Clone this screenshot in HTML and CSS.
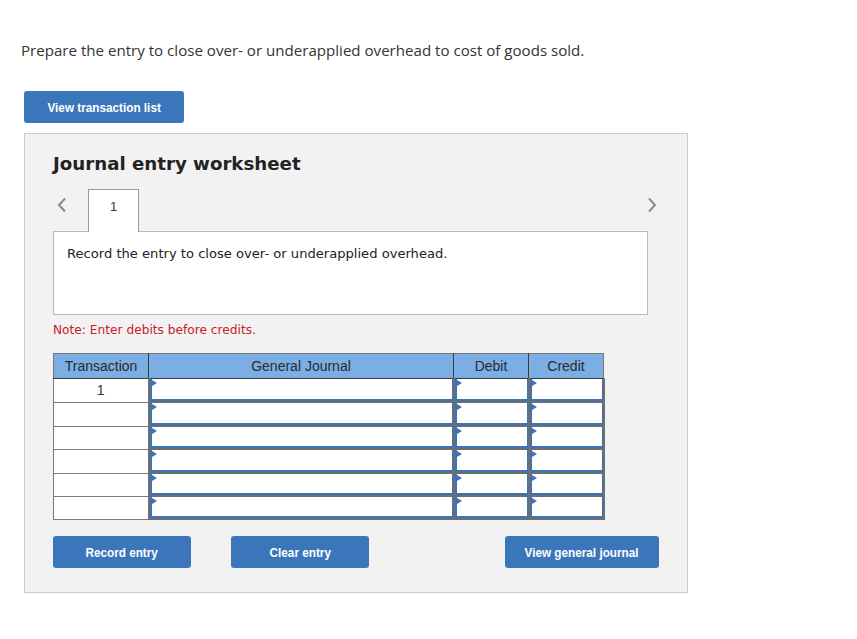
FILE: index.html
```html
<!DOCTYPE html>
<html lang="en">
<head>
<meta charset="utf-8">
<title>Journal entry worksheet</title>
<link rel="stylesheet" href="styles.css">
</head>
<body>
<p class="prompt">Prepare the entry to close over- or underapplied overhead to cost of goods sold.</p>
<button class="btn btn-list"><span class="lbl">View transaction list</span></button>
<section class="panel">
  <h2 class="title">Journal entry worksheet</h2>
  <div class="tabrow">
    <span class="chev chev-left"><svg width="10" height="16" viewBox="0 0 10 16"><polyline points="8,1.5 2,8 8,14.5" fill="none" stroke="#8c8c8c" stroke-width="2"/></svg></span>
    <span class="tab">1</span>
    <span class="chev chev-right"><svg width="10" height="16" viewBox="0 0 10 16"><polyline points="2,1.5 8,8 2,14.5" fill="none" stroke="#8c8c8c" stroke-width="2"/></svg></span>
  </div>
  <div class="taskbox">Record the entry to close over- or underapplied overhead.</div>
  <p class="note">Note: Enter debits before credits.</p>
  <table class="journal">
    <colgroup><col class="c1"><col class="c2"><col class="c3"><col class="c4"></colgroup>
    <thead>
      <tr><th>Transaction</th><th>General Journal</th><th>Debit</th><th>Credit</th></tr>
    </thead>
    <tbody>
      <tr class="r24"><td class="tn">1</td><td class="in"><div class="field"></div></td><td class="in"><div class="field"></div></td><td class="in"><div class="field"></div></td></tr>
      <tr class="r24"><td class="tn"></td><td class="in"><div class="field"></div></td><td class="in"><div class="field"></div></td><td class="in"><div class="field"></div></td></tr>
      <tr class="r23"><td class="tn"></td><td class="in"><div class="field"></div></td><td class="in"><div class="field"></div></td><td class="in"><div class="field"></div></td></tr>
      <tr class="r24"><td class="tn"></td><td class="in"><div class="field"></div></td><td class="in"><div class="field"></div></td><td class="in"><div class="field"></div></td></tr>
      <tr class="r23"><td class="tn"></td><td class="in"><div class="field"></div></td><td class="in"><div class="field"></div></td><td class="in"><div class="field"></div></td></tr>
      <tr class="r23"><td class="tn"></td><td class="in"><div class="field"></div></td><td class="in"><div class="field"></div></td><td class="in"><div class="field"></div></td></tr>
    </tbody>
  </table>
  <div class="actions">
    <button class="btn btn-act"><span class="lbl">Record entry</span></button>
    <button class="btn btn-act btn-clear"><span class="lbl">Clear entry</span></button>
    <button class="btn btn-act btn-view"><span class="lbl">View general journal</span></button>
  </div>
</section>
</body>
</html>
```

FILE: styles.css
```css
html, body {
  margin: 0;
  padding: 0;
  background: #ffffff;
}
body {
  font-family: "Open Sans", "Liberation Sans", sans-serif;
  color: #333333;
}
.prompt {
  margin: 0;
  padding: 40px 0 0 21px;
  font-size: 15.1px;
  line-height: 20px;
  color: #333;
}
.btn {
  display: block;
  border: 0;
  border-radius: 3px;
  background: #3b76ba;
  color: #ffffff;
  font-family: "Liberation Sans", Arial, sans-serif;
  font-weight: bold;
  font-size: 13.5px;
  height: 32px;
  padding: 0;
  cursor: pointer;
  text-align: center;
}
.lbl {
  display: inline-block;
  transform: scaleX(0.87);
  white-space: nowrap;
}
.btn-list {
  margin: 31px 0 0 24px;
  width: 160px;
}
.panel {
  margin: 10px 0 0 24px;
  width: 662px;
  height: 458px;
  background: #f2f2f2;
  border: 1px solid #c9c9c9;
  padding: 0;
  box-sizing: content-box;
}
.title {
  margin: 18px 0 0 28px;
  font-family: "DejaVu Sans", Verdana, "Open Sans", sans-serif;
  font-weight: bold;
  font-size: 18.2px;
  line-height: 24px;
  color: #222;
}
.tabrow {
  display: flex;
  align-items: flex-start;
  margin: 13px 0 0 28px;
  width: 604px;
  height: 42px;
}
.chev {
  display: flex;
  height: 32px;
  align-items: center;
}
.chev-left {
  width: 35px;
  padding-left: 4px;
  box-sizing: border-box;
}
.chev-right {
  margin-left: auto;
}
.tab {
  width: 51px;
  height: 43px;
  box-sizing: border-box;
  border: 1px solid #9a9a9a;
  border-bottom: 0;
  background: #fff;
  text-align: center;
  font-family: "Liberation Sans", Arial, sans-serif;
  font-size: 13px;
  line-height: 34px;
  color: #333;
  position: relative;
  z-index: 1;
  margin-bottom: -1px;
}
.taskbox {
  margin: 0 0 0 28px;
  width: 595px;
  height: 84px;
  box-sizing: border-box;
  background: #fff;
  border: 1px solid #b9b9b9;
  padding: 13px 0 0 13px;
  font-family: "DejaVu Sans", Verdana, "Open Sans", sans-serif;
  font-size: 13.1px;
  line-height: 18px;
  color: #222;
}
.note {
  margin: 7px 0 0 28px;
  font-family: "DejaVu Sans", Verdana, "Open Sans", sans-serif;
  font-size: 12.2px;
  line-height: 16px;
  color: #c7202b;
}
.journal {
  margin: 15px 0 0 28px;
  border-collapse: collapse;
  table-layout: fixed;
  width: 550px;
  font-family: "Liberation Sans", Arial, sans-serif;
  font-size: 14px;
}
.c1 { width: 95px; }
.c2 { width: 305px; }
.c3 { width: 75px; }
.c4 { width: 75px; }
.journal th {
  background: #7aaee5;
  color: #2b2b2b;
  font-weight: normal;
  height: 24px;
  padding: 0;
  border: 1px solid #3a3a3a;
  border-top-color: #777;
  text-align: center;
}
.journal th:first-child { border-left-color: #777; }
.journal th:last-child { border-right-color: #777; }
.journal td {
  padding: 0;
  background: #fff;
}
.journal td.tn {
  border: 1px solid #7a7a7a;
  text-align: center;
  color: #333;
}
.journal td.in {
  border: 2px solid #6e6e6e;
  border-top-width: 1px;
}
.journal tr.r24 td { height: 22px; }
.journal tr.r23 td { height: 21px; }
.field {
  position: relative;
  height: 100%;
  box-sizing: border-box;
  border: 1px solid #3b73b8;
  border-left-width: 2px;
  border-bottom-width: 2px;
  border-top: 0;
}
.field::before {
  content: "";
  position: absolute;
  left: 0;
  top: 1px;
  width: 0;
  height: 0;
  border-top: 3px solid transparent;
  border-bottom: 3px solid transparent;
  border-left: 5px solid #3b73b8;
}
.actions {
  display: flex;
  margin: 16px 0 0 28px;
}
.btn-act {
  width: 138px;
}
.btn-clear {
  margin-left: 40px;
}
.btn-view {
  margin-left: 136px;
  width: 154px;
}
```
